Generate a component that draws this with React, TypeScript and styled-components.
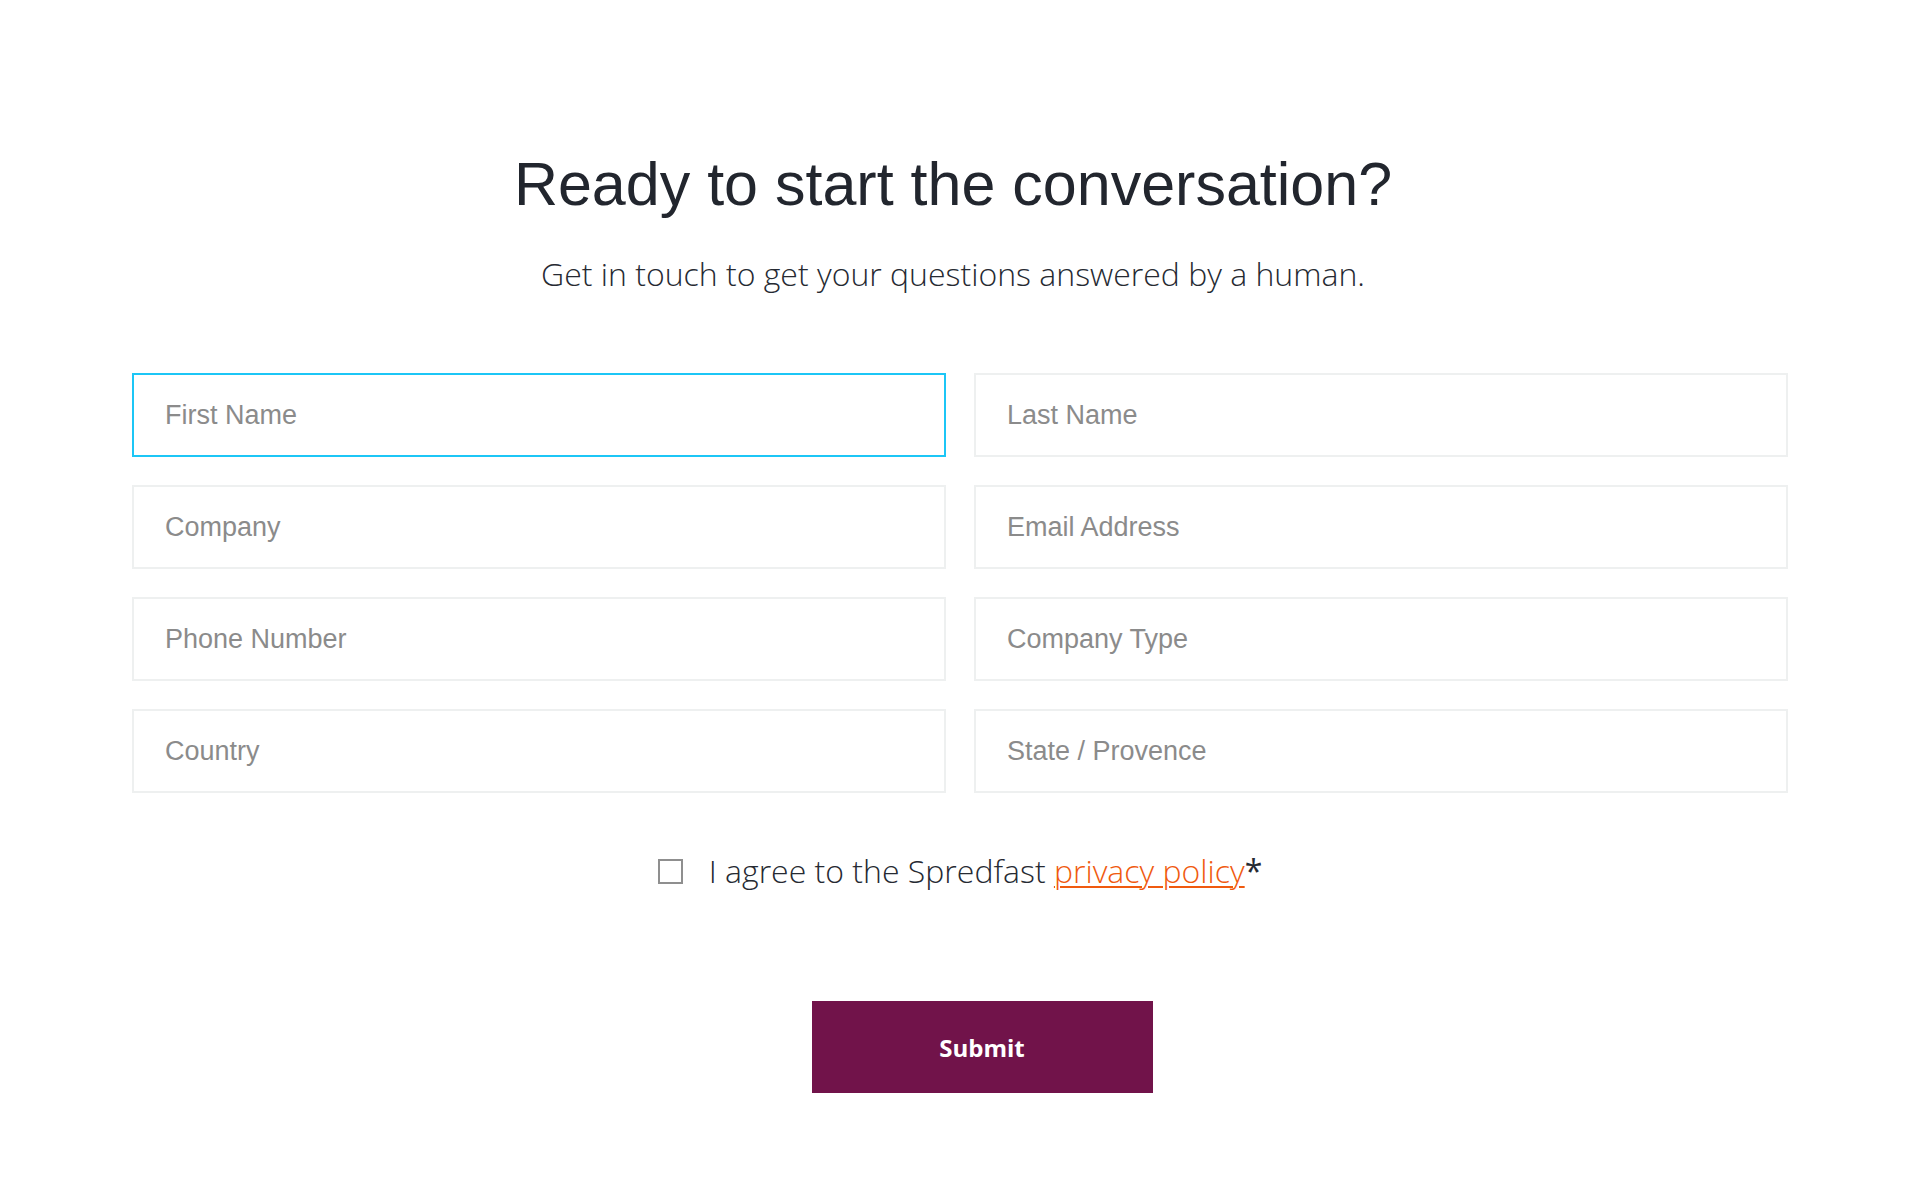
import React from "react";
import styled, { createGlobalStyle } from "styled-components";

const GlobalStyle = createGlobalStyle`
  html, body {
    margin: 0;
    padding: 0;
    background: #ffffff;
  }
  body {
    font-family: "Open Sans", "Liberation Sans", Arial, sans-serif;
  }
  * {
    box-sizing: border-box;
  }
`;

const Page = styled.div`
  width: 1920px;
  min-height: 1204px;
  padding-top: 149px;
  display: flex;
  flex-direction: column;
  align-items: center;
`;

const Title = styled.h1`
  margin: 0;
  font-family: "Liberation Sans", Arial, sans-serif;
  font-weight: 400;
  font-size: 61px;
  line-height: 70px;
  color: #22262e;
  transform: translateX(-7px);
`;

const Subtitle = styled.p`
  margin: 35px 0 0;
  font-family: "Open Sans", sans-serif;
  font-weight: 300;
  font-size: 32px;
  line-height: 40px;
  color: #262a32;
  transform: translateX(-7px);
`;

const Form = styled.form`
  width: 1656px;
  margin-top: 79px;
  display: flex;
  flex-direction: column;
  align-items: center;
`;

const FieldGrid = styled.div`
  width: 100%;
  display: grid;
  grid-template-columns: 1fr 1fr;
  gap: 28px;
`;

const Field = styled.input<{ $active?: boolean }>`
  height: 84px;
  width: 100%;
  padding: 0 31px;
  border: 2px solid ${({ $active }) => ($active ? "#1cc6f6" : "#eef0f0")};
  border-radius: 0;
  background: #ffffff;
  outline: none;
  font-family: "Liberation Sans", Arial, sans-serif;
  font-size: 27px;
  color: #333;

  &::placeholder {
    color: #8b8b8b;
  }
`;

const AgreeRow = styled.label`
  margin-top: 58px;
  display: flex;
  align-items: center;
  gap: 26px;
  font-family: "Open Sans", sans-serif;
  font-weight: 300;
  font-size: 32px;
  line-height: 40px;
  color: #262a32;
  cursor: pointer;
`;

const CheckBox = styled.span`
  width: 25px;
  height: 25px;
  border: 2px solid #8f8f8f;
  background: #fff;
  flex: none;
`;

const PolicyLink = styled.a`
  color: #f05a0f;
  text-decoration: underline;
  text-underline-offset: 3px;
  text-decoration-thickness: 2px;
`;

const Required = styled.span`
  font-weight: 400;
`;

const SubmitRow = styled.div`
  margin-top: 110px;
  padding-left: 44px;
  display: flex;
  justify-content: center;
`;

const SubmitButton = styled.button`
  width: 341px;
  height: 92px;
  border: none;
  border-radius: 0;
  background: #71134a;
  color: #ffffff;
  font-family: "Open Sans", sans-serif;
  font-weight: 700;
  font-size: 24px;
  cursor: pointer;
`;

const fields = [
  "First Name",
  "Last Name",
  "Company",
  "Email Address",
  "Phone Number",
  "Company Type",
  "Country",
  "State / Provence",
];

export default function App() {
  return (
    <>
      <GlobalStyle />
      <Page>
        <Title>Ready to start the conversation?</Title>
        <Subtitle>Get in touch to get your questions answered by a human.</Subtitle>
        <Form onSubmit={(e) => e.preventDefault()}>
          <FieldGrid>
            {fields.map((f, i) => (
              <Field key={f} placeholder={f} $active={i === 0} />
            ))}
          </FieldGrid>
          <AgreeRow>
            <CheckBox />
            <span>
              I agree to the Spredfast <PolicyLink href="#">privacy policy</PolicyLink>
              <Required>*</Required>
            </span>
          </AgreeRow>
          <SubmitRow>
            <SubmitButton type="submit">Submit</SubmitButton>
          </SubmitRow>
        </Form>
      </Page>
    </>
  );
}
